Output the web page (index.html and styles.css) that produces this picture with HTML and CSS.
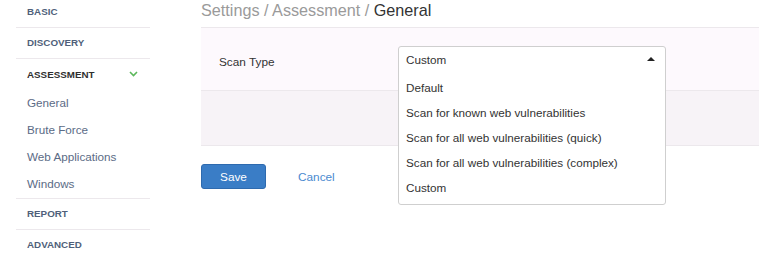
FILE: index.html
```html
<!DOCTYPE html>
<html lang="en">
  <head>
    <meta charset="UTF-8" />
    <title>Settings / Assessment / General</title>
    <link rel="stylesheet" href="styles.css">
  </head>
  <body>
    <div class="layout">
      <nav class="sidebar">
        <div class="nav-section">BASIC</div>
        <div class="nav-section">DISCOVERY</div>
        <div class="nav-section open">
          <div class="nav-head">
            <span>ASSESSMENT</span>
            <svg class="chevron" width="9" height="6" viewBox="0 0 9 6">
              <path d="M1 1 L4.5 4.5 L8 1" fill="none" stroke="#5cb85c" stroke-width="1.6" />
            </svg>
          </div>
          <ul class="sub-list">
            <li>General</li>
            <li>Brute Force</li>
            <li>Web Applications</li>
            <li>Windows</li>
          </ul>
        </div>
        <div class="nav-section">REPORT</div>
        <div class="nav-section last">ADVANCED</div>
      </nav>

      <main class="content">
        <h1 class="crumbs">
          <span class="muted">Settings / Assessment / </span>General
        </h1>

        <div class="panel">
          <div class="panel-row">
            <label class="field-label">Scan Type</label>
            <div class="select-wrap">
              <div class="dropdown">
                <div class="dropdown-current">
                  <span>Custom</span>
                  <span class="caret"></span>
                </div>
                <ul class="dropdown-options">
                  <li>Default</li>
                  <li>Scan for known web vulnerabilities</li>
                  <li>Scan for all web vulnerabilities (quick)</li>
                  <li>Scan for all web vulnerabilities (complex)</li>
                  <li>Custom</li>
                </ul>
              </div>
            </div>
          </div>
          <div class="panel-row alt"></div>
        </div>

        <div class="actions">
          <button class="btn-primary">Save</button>
          <a class="btn-link" href="#">Cancel</a>
        </div>
      </main>
    </div>
  </body>
</html>
```

FILE: styles.css
```css
* {
  margin: 0;
  padding: 0;
  box-sizing: border-box;
}

body {
  font-family: "Liberation Sans", Arial, sans-serif;
  background: #ffffff;
  color: #333333;
  overflow: hidden;
}

.layout {
  display: flex;
  gap: 51px;
  padding-left: 16px;
}

/* Sidebar */
.sidebar {
  width: 134px;
  flex-shrink: 0;
}

.nav-section {
  font-size: 9.8px;
  font-weight: 700;
  color: #4f5f7a;
  height: 31px;
  line-height: 30px;
  padding-left: 11px;
  border-bottom: 1px solid #ece8ec;
}

.nav-section:first-child {
  height: 28px;
  line-height: 23px;
}

.nav-section.last {
  border-bottom: none;
}

.nav-section.open {
  height: auto;
  line-height: normal;
  color: #2f2f2f;
}

.nav-head {
  display: flex;
  justify-content: space-between;
  align-items: center;
  padding-right: 12px;
  height: 31px;
}

.chevron {
  display: block;
  margin-top: -1px;
}

.sub-list {
  list-style: none;
}

.sub-list li {
  font-size: 11.7px;
  font-weight: 400;
  color: #5b6b86;
  height: 27px;
  line-height: 26px;
}

/* Content */
.content {
  flex: 1;
  position: relative;
}

.crumbs {
  font-size: 16.2px;
  font-weight: 400;
  color: #333333;
  line-height: 20px;
  height: 28px;
  border-bottom: 1px solid #ece8ec;
}

.crumbs .muted {
  color: #9a9a9a;
}

.panel {
  background: #fdf9fd;
}

.panel-row {
  display: flex;
  align-items: flex-start;
  height: 63px;
  border-bottom: 1px solid #ece8ec;
}

.panel-row.alt {
  height: 55px;
  background: #f7f3f7;
}

.field-label {
  font-size: 11.8px;
  color: #333333;
  width: 197px;
  padding-left: 18px;
  padding-top: 27px;
}

.select-wrap {
  position: relative;
  width: 268px;
}

.dropdown {
  position: absolute;
  top: 18px;
  left: 0;
  width: 268px;
  background: #ffffff;
  border: 1px solid #cfcfcf;
  border-radius: 3px;
  z-index: 2;
}

.dropdown-current {
  display: flex;
  justify-content: space-between;
  align-items: center;
  font-size: 11.7px;
  height: 27px;
  padding: 0 8px 3px 7px;
}

.caret {
  width: 0;
  height: 0;
  border-left: 4px solid transparent;
  border-right: 4px solid transparent;
  border-bottom: 4px solid #222;
  margin-right: 2px;
}

.dropdown-options {
  list-style: none;
  padding: 1px 0 4px;
}

.dropdown-options li {
  font-size: 11.7px;
  color: #333333;
  height: 25px;
  line-height: 25px;
  padding-left: 7px;
}

.actions {
  display: flex;
  align-items: center;
  gap: 32px;
  margin-top: 18px;
}

.btn-primary {
  font-family: inherit;
  font-size: 11.8px;
  color: #ffffff;
  background: #3a7dc6;
  border: 1px solid #2e6aae;
  border-radius: 3px;
  width: 65px;
  height: 25px;
}

.btn-link {
  font-size: 11.8px;
  color: #4a8ad0;
  text-decoration: none;
}
```
